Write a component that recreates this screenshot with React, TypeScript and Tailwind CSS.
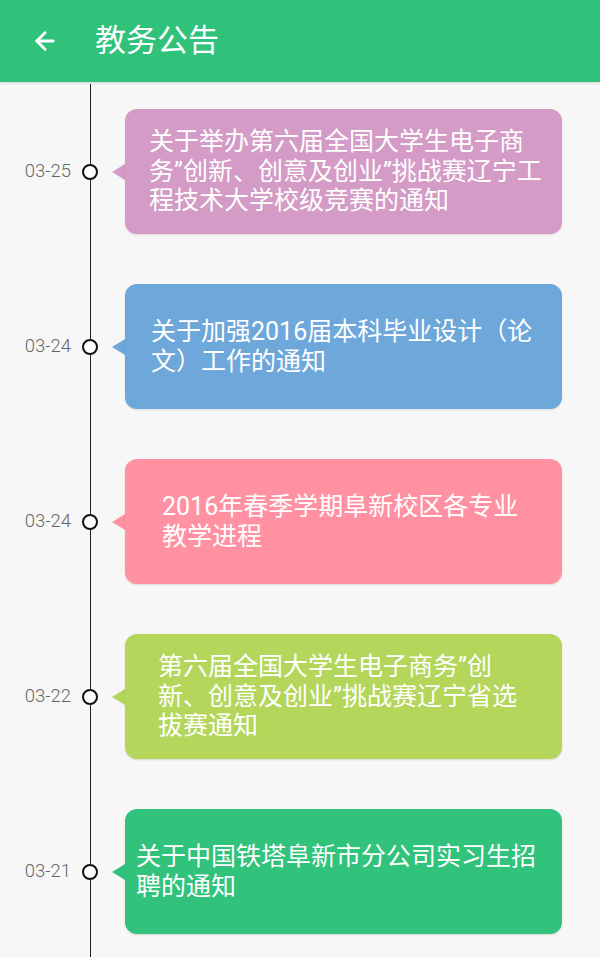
import React from 'react';
import { ArrowLeft } from 'lucide-react';

interface Notice {
  date: string;
  lines: string[];
  bg: string;
  tail: string;
  pad: string;
}

// text blocks are not quite centred in the original, so each card keeps its own left inset
const NOTICES: Notice[] = [
  {
    date: '03-25',
    lines: ['关于举办第六届全国大学生电子商', '务”创新、创意及创业”挑战赛辽宁工', '程技术大学校级竞赛的通知'],
    bg: 'bg-[#d39bc5]',
    tail: 'border-r-[#d39bc5]',
    pad: 'pl-[24px]',
  },
  {
    date: '03-24',
    lines: ['关于加强2016届本科毕业设计（论', '文）工作的通知'],
    bg: 'bg-[#6ea7da]',
    tail: 'border-r-[#6ea7da]',
    pad: 'pl-[26px]',
  },
  {
    date: '03-24',
    lines: ['2016年春季学期阜新校区各专业', '教学进程'],
    bg: 'bg-[#ff91a2]',
    tail: 'border-r-[#ff91a2]',
    pad: 'pl-[37px]',
  },
  {
    date: '03-22',
    lines: ['第六届全国大学生电子商务”创', '新、创意及创业”挑战赛辽宁省选', '拔赛通知'],
    bg: 'bg-[#b3d65b]',
    tail: 'border-r-[#b3d65b]',
    pad: 'pl-[33px]',
  },
  {
    date: '03-21',
    lines: ['关于中国铁塔阜新市分公司实习生招', '聘的通知'],
    bg: 'bg-[#31c27b]',
    tail: 'border-r-[#31c27b]',
    pad: 'pl-[11px]',
  },
];

function NoticeRow({ notice }: { notice: Notice }) {
  return (
    <div className="flex h-[175px] items-stretch">
      {/* date */}
      <div className="flex w-[71px] items-center justify-end text-[18.5px] font-light text-[#666666]">
        {notice.date}
      </div>

      {/* timeline node */}
      <div className="ml-[11px] flex w-[16px] flex-col items-center">
        <div className="w-px flex-1 bg-[#222222]" />
        <div className="h-[16px] w-[16px] rounded-full border-[2.5px] border-[#111111] bg-white" />
        <div className="w-px flex-1 bg-[#222222]" />
      </div>

      {/* bubble */}
      <div className="ml-[14px] flex items-center">
        <div
          className={`h-0 w-0 border-y-[8px] border-r-[13px] border-y-transparent ${notice.tail}`}
        />
        <div
          className={`flex h-[125px] w-[437px] items-center rounded-[12px] shadow-[0_1px_2px_rgba(0,0,0,0.12)] ${notice.bg} ${notice.pad}`}
        >
          <div className="text-left text-[25px] leading-[29.5px] text-white">
            {notice.lines.map((l, i) => (
              <div key={i} className="whitespace-nowrap">
                {l}
              </div>
            ))}
          </div>
        </div>
      </div>
    </div>
  );
}

export default function App() {
  return (
    <div
      className="flex h-[957px] w-[600px] flex-col overflow-hidden bg-[#f7f7f7]"
      style={{ fontFamily: 'Roboto, "Noto Sans CJK SC", sans-serif' }}
    >
      <header className="flex h-[82px] shrink-0 items-center bg-[#30c27b] shadow-[0_1px_3px_rgba(0,0,0,0.15)]">
        <ArrowLeft className="ml-[31px] h-[28px] w-[28px] text-white" strokeWidth={2.5} />
        <h1 className="ml-[36px] text-[31px] text-white">教务公告</h1>
      </header>

      <div className="flex flex-1 flex-col pt-[2px]">
        {NOTICES.map((n, i) => (
          <NoticeRow key={i} notice={n} />
        ))}
      </div>
    </div>
  );
}
